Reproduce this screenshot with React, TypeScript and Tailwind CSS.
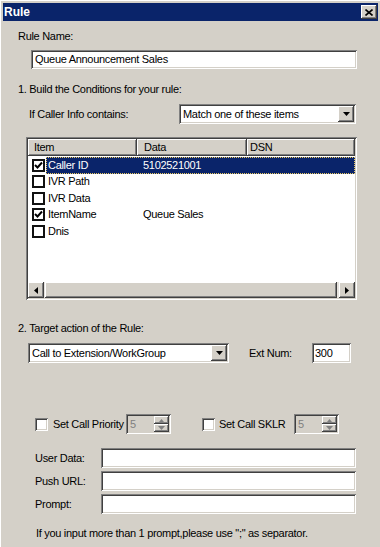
import React from "react";

const sunken =
  "shadow-[inset_1px_1px_0_#808080,inset_-1px_-1px_0_#ffffff,inset_2px_2px_0_#404040,inset_-2px_-2px_0_#d4d0c8]";
const raised =
  "shadow-[inset_-1px_-1px_0_#404040,inset_1px_1px_0_#ffffff,inset_-2px_-2px_0_#808080,inset_2px_2px_0_#d4d0c8]";

const DownArrow = ({ color = "#000" }: { color?: string }) => (
  <svg width="7" height="4" viewBox="0 0 7 4">
    <path d="M0 0h7L3.5 4z" fill={color} />
  </svg>
);

const Combo = ({ value, className }: { value: string; className: string }) => (
  <div className={`${sunken} ${className} flex h-[20px] items-center bg-white pl-[4px] pr-[2px]`}>
    <span className="flex-1 truncate">{value}</span>
    <div className={`${raised} flex h-[16px] w-[16px] items-center justify-center bg-[#d4d0c8]`}>
      <DownArrow />
    </div>
  </div>
);

const Check = () => (
  <svg width="9" height="9" viewBox="0 0 9 9" className="block">
    <path d="M1 4l2.5 2.5L8 1.5" stroke="#000" strokeWidth="2" fill="none" />
  </svg>
);

const ListBox = ({ checked }: { checked: boolean }) => (
  <div className="flex h-[13px] w-[13px] items-center justify-center border-2 border-[#111] bg-white">
    {checked && <Check />}
  </div>
);

const ClassicBox = () => <div className={`${sunken} h-[13px] w-[13px] shrink-0 bg-white`} />;

const Spin = () => (
  <div className={`${sunken} flex h-[20px] w-[45px] shrink-0 items-center bg-[#d4d0c8] pl-[4px] pr-[2px] text-[#808080]`}>
    <span className="flex-1">5</span>
    <div className="flex flex-col">
      <div className={`${raised} flex h-[8px] w-[15px] items-center justify-center`}>
        <svg width="5" height="3" viewBox="0 0 5 3"><path d="M0 3h5L2.5 0z" fill="#808080" /></svg>
      </div>
      <div className={`${raised} flex h-[8px] w-[15px] items-center justify-center`}>
        <DownArrow color="#808080" />
      </div>
    </div>
  </div>
);

const rows = [
  { item: "Caller ID", data: "5102521001", checked: true, selected: true },
  { item: "IVR Path", data: "", checked: false },
  { item: "IVR Data", data: "", checked: false },
  { item: "ItemName", data: "Queue Sales", checked: true },
  { item: "Dnis", data: "", checked: false },
];

export default function App() {
  return (
    <div
      className="h-[547px] w-[380px] overflow-hidden whitespace-nowrap bg-[#d4d0c8] text-[11px] leading-[13px] tracking-[-0.3px] text-black"
      style={{ fontFamily: '"Liberation Sans", Arial, sans-serif' }}
    >
      <div className="h-full border-l-[1px] border-t-[1px] border-[#ffffff] p-[2px]">
        {/* title bar */}
        <div className="flex h-[18px] items-center justify-between bg-[#0a246a] pl-[1px] pr-[1px]">
          <span className="text-[12px] font-bold tracking-normal text-white">Rule</span>
          <div className={`${raised} flex h-[14px] w-[16px] items-center justify-center bg-[#d4d0c8]`}>
            <svg width="8" height="7" viewBox="0 0 8 7">
              <path d="M0.5 0.5l7 6M7.5 0.5l-7 6" stroke="#000" strokeWidth="1.6" />
            </svg>
          </div>
        </div>

        <div className="ml-[15px] mt-[9px] h-[13px]">Rule Name:</div>
        <div className={`${sunken} ml-[28px] mt-[7px] flex h-[19px] w-[326px] items-center bg-white pl-[4px]`}>
          Queue Announcement Sales
        </div>

        <div className="ml-[15px] mt-[14px] h-[13px]">1. Build the Conditions for your rule:</div>
        <div className="ml-[26px] mt-[8px] flex items-center">
          <span className="w-[150px]">If Caller Info contains:</span>
          <Combo value="Match one of these items" className="w-[177px]" />
        </div>

        {/* list view */}
        <div className={`${sunken} ml-[23px] mt-[13px] flex h-[163px] w-[331px] flex-col bg-white p-[2px]`}>
          <div className="flex h-[17px] shrink-0">
            <div className={`${raised} flex w-[109px] items-center bg-[#d4d0c8] pl-[6px]`}>Item</div>
            <div className={`${raised} flex w-[110px] items-center bg-[#d4d0c8] pl-[7px]`}>Data</div>
            <div className={`${raised} flex flex-1 items-center bg-[#d4d0c8] pl-[3px]`}>DSN</div>
          </div>
          <div className="flex-1 pt-[1px]">
            {rows.map((r) => (
              <div key={r.item} className="flex h-[16.5px] items-center">
                <div className="ml-[4px] mr-[1px]">
                  <ListBox checked={r.checked} />
                </div>
                <div
                  className={`flex h-full flex-1 items-center ${
                    r.selected ? "border border-dotted border-[#e8c860] bg-[#0a246a] text-white" : "border border-transparent"
                  }`}
                >
                  <span className="w-[96px] pl-[1px]">{r.item}</span>
                  <span>{r.data}</span>
                </div>
              </div>
            ))}
          </div>
          <div className="flex h-[16px] shrink-0 bg-[#e6e3de]">
            <div className={`${raised} flex w-[16px] items-center justify-center bg-[#d4d0c8]`}>
              <svg width="4" height="7" viewBox="0 0 4 7"><path d="M4 0v7L0 3.5z" fill="#000" /></svg>
            </div>
            <div className={`${raised} ml-[1px] flex-1 bg-[#d4d0c8]`} />
            <div className="w-[2px]" />
            <div className={`${raised} flex w-[16px] items-center justify-center bg-[#d4d0c8]`}>
              <svg width="4" height="7" viewBox="0 0 4 7"><path d="M0 0v7L4 3.5z" fill="#000" /></svg>
            </div>
          </div>
        </div>

        <div className="ml-[15px] mt-[22px] h-[13px]">2. Target action of the Rule:</div>
        <div className="ml-[25px] mt-[8px] flex items-center">
          <Combo value="Call to Extension/WorkGroup" className="w-[201px]" />
          <span className="ml-[20px] w-[63px]">Ext Num:</span>
          <div className={`${sunken} flex h-[20px] w-[39px] items-center bg-white pl-[3px]`}>300</div>
        </div>

        <div className="ml-[32px] mt-[51px] flex items-center">
          <ClassicBox />
          <span className="ml-[5px] w-[73px] shrink-0">Set Call Priority</span>
          <Spin />
          <div className="ml-[31px]">
            <ClassicBox />
          </div>
          <span className="ml-[4px] w-[75px] shrink-0">Set Call SKLR</span>
          <Spin />
        </div>

        <div className="mt-[14px] flex flex-col gap-[3px]">
          {["User Data:", "Push URL:", "Prompt:"].map((l) => (
            <div key={l} className="ml-[32px] flex items-center">
              <span className="w-[66px]">{l}</span>
              <div className={`${sunken} h-[20px] w-[255px] bg-white`} />
            </div>
          ))}
        </div>

        <div className="ml-[33px] mt-[13px]">If you input more than 1 prompt,please use ";" as separator.</div>
      </div>
    </div>
  );
}
